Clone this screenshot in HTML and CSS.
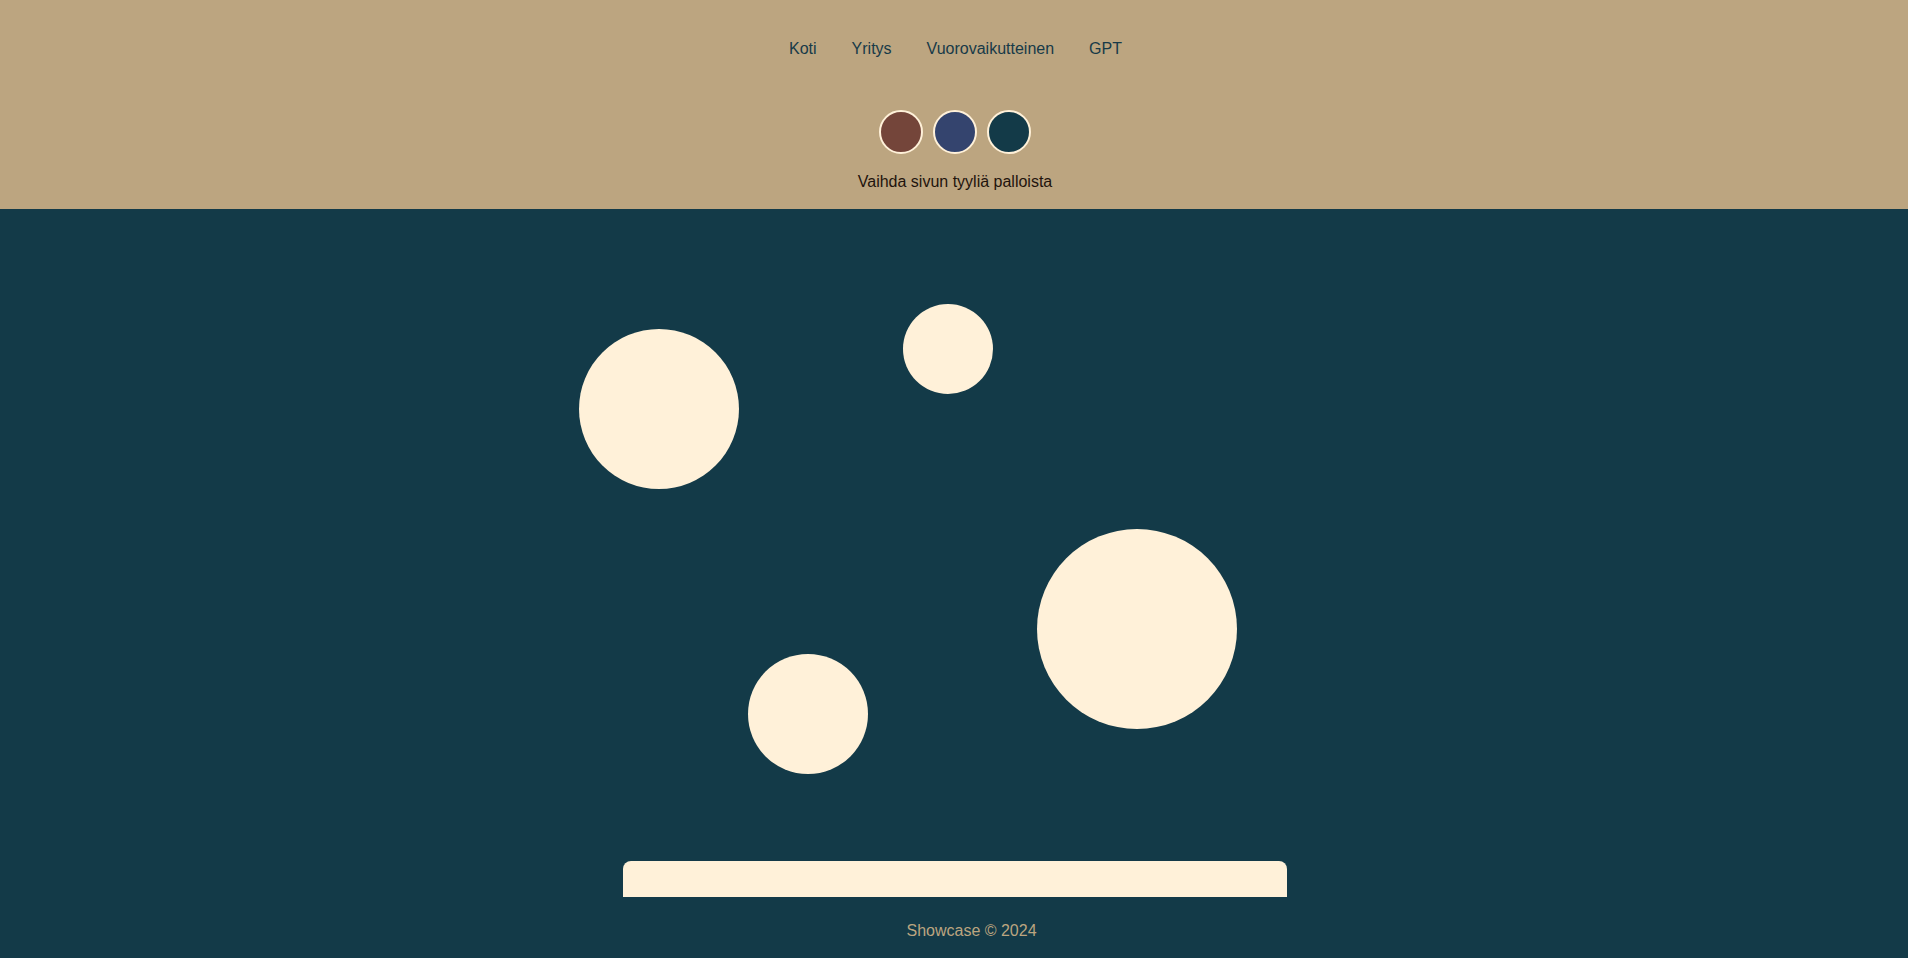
FILE: index.html
```html
<!DOCTYPE html>
<html lang="fi">
<head>
<meta charset="utf-8">
<title>Showcase</title>
<link rel="stylesheet" href="styles.css">
</head>
<body>
<header class="site-header">
  <nav class="nav">
    <a href="#" class="nav-link">Koti</a>
    <a href="#" class="nav-link">Yritys</a>
    <a href="#" class="nav-link">Vuorovaikutteinen</a>
    <a href="#" class="nav-link">GPT</a>
  </nav>
  <div class="swatches">
    <button class="swatch swatch-brown" aria-label="Ruskea"></button>
    <button class="swatch swatch-blue" aria-label="Sininen"></button>
    <button class="swatch swatch-teal" aria-label="Tummanvihreä"></button>
  </div>
  <p class="hint">Vaihda sivun tyyliä palloista</p>
</header>
<main class="stage">
  <div class="bubbles">
    <span class="bubble b1"></span>
    <span class="bubble b2"></span>
    <span class="bubble b3"></span>
    <span class="bubble b4"></span>
  </div>
  <section class="card"></section>
</main>
<footer class="site-footer">Showcase © 2024</footer>
</body>
</html>
```

FILE: styles.css
```css
* { box-sizing: border-box; }
html, body { margin: 0; padding: 0; }
body {
  font-family: "Liberation Sans", Arial, sans-serif;
  font-size: 16px;
  background: #133a48;
  height: 958px;
  overflow: hidden;
}
.site-header {
  background: #bca580;
  height: 209px;
  display: flex;
  flex-direction: column;
  align-items: center;
  padding-top: 40px;
}
.nav {
  display: flex;
  gap: 35px;
  line-height: 18px;
  padding-left: 3px;
}
.nav-link {
  color: #173a48;
  text-decoration: none;
}
.swatches {
  display: flex;
  gap: 10px;
  margin-top: 52px;
  padding-left: 2px;
}
.swatch {
  width: 44px;
  height: 44px;
  border-radius: 50%;
  border: 2px solid #fff1d9;
  padding: 0;
  margin: 0;
}
.swatch-brown { background: #74453a; }
.swatch-blue { background: #34446e; }
.swatch-teal { background: #133a48; }
.hint {
  margin: 19px 0 0;
  line-height: 18px;
  color: #1f140d;
  padding-left: 2px;
}
.stage {
  position: relative;
  height: 688px;
  display: flex;
  flex-direction: column;
  justify-content: flex-end;
  align-items: center;
  overflow: hidden;
}
.bubbles {
  position: absolute;
  inset: 0;
}
.bubble {
  position: absolute;
  border-radius: 50%;
  background: #fff1d9;
}
.b1 { left: 579px; top: 120px; width: 160px; height: 160px; }
.b2 { left: 903px; top: 95px; width: 90px; height: 90px; }
.b3 { left: 748px; top: 445px; width: 120px; height: 120px; }
.b4 { left: 1037px; top: 320px; width: 200px; height: 200px; }
.card {
  width: 664px;
  height: 36px;
  margin-left: 2px;
  background: #fff1d9;
  border-radius: 8px 8px 0 0;
}
.site-footer {
  height: 61px;
  display: flex;
  align-items: center;
  justify-content: center;
  padding-left: 35px;
  padding-top: 6px;
  color: #bca580;
  line-height: 18px;
}
```
